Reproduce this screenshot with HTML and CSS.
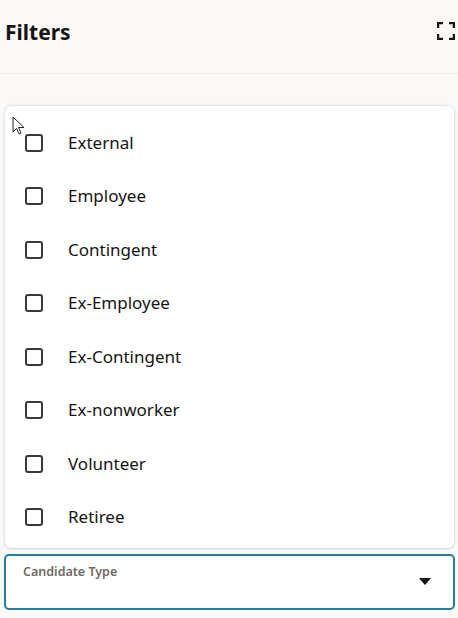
FILE: index.html
```html
<!DOCTYPE html>
<html>
<head>
<meta charset="utf-8">
<link rel="stylesheet" href="styles.css">
</head>
<body>
<div class="page">
  <header class="header">
    <h1 class="title">Filters</h1>
    <button class="expand" aria-label="Expand">
      <svg width="18" height="18" viewBox="0 0 18 18">
        <path d="M1 6V1h5M12 1h5v5M17 12v5h-5M6 17H1v-5" fill="none" stroke="#161513" stroke-width="2.4"/>
      </svg>
    </button>
  </header>
  <div class="card">
    <label class="row"><span class="box"></span><span class="lbl">External</span></label>
    <label class="row"><span class="box"></span><span class="lbl">Employee</span></label>
    <label class="row"><span class="box"></span><span class="lbl">Contingent</span></label>
    <label class="row"><span class="box"></span><span class="lbl">Ex-Employee</span></label>
    <label class="row"><span class="box"></span><span class="lbl">Ex-Contingent</span></label>
    <label class="row"><span class="box"></span><span class="lbl">Ex-nonworker</span></label>
    <label class="row"><span class="box"></span><span class="lbl">Volunteer</span></label>
    <label class="row"><span class="box"></span><span class="lbl">Retiree</span></label>
    <svg class="cursor" width="13" height="19" viewBox="0 0 13 19">
      <path d="M1 1v15l3.5-3.5 2.5 5.5 2-1-2.5-5.5H12z" fill="#fff" stroke="#222" stroke-width="1"/>
    </svg>
  </div>
  <div class="field">
    <span class="field-label">Candidate Type</span>
    <svg class="caret" width="12" height="7" viewBox="0 0 12 7"><path d="M0 0h12L6 7z" fill="#161513"/></svg>
  </div>
</div>
</body>
</html>
```
FILE: styles.css
```css
html, body {
  margin: 0;
  padding: 0;
  background: #fbf9f8;
  font-family: "Noto Sans", "Open Sans", sans-serif;
  color: #161513;
}
.page {
  width: 458px;
  height: 618px;
  overflow: hidden;
}
.header {
  border-bottom: 1px solid #ece9e6;
  display: flex;
  align-items: center;
  justify-content: space-between;
  padding: 0 3px 0 5px;
  box-sizing: border-box;
  height: 74px;
}
.title {
  margin: 0;
  font-size: 21px;
  font-weight: 700;
  line-height: 28px;
  margin-top: -10px;
}
.expand {
  background: none;
  border: 0;
  padding: 0;
  width: 18px;
  height: 18px;
  margin-top: -12px;
  display: flex;
}
.card {
  position: relative;
  margin: 32px 4px 0 5px;
  background: #fff;
  border-radius: 6px;
  box-shadow: 0 0 3px rgba(0,0,0,0.18), 0 1px 2px rgba(0,0,0,0.08);
  padding: 10px 0 4px;
}
.row {
  height: 53.5px;
  display: flex;
  align-items: center;
  padding-left: 20px;
}
.box {
  width: 14px;
  height: 14px;
  border: 2px solid #3b3836;
  border-radius: 3px;
  flex: none;
}
.lbl {
  margin-left: 25px;
  font-size: 17px;
  line-height: 24px;
}
.cursor {
  position: absolute;
  left: 7px;
  top: 10px;
}
.field {
  margin: 6px 3px 0 4px;
  height: 56px;
  box-sizing: border-box;
  border: 2px solid #227e9e;
  border-radius: 5px;
  background: #fff;
  position: relative;
  padding: 7px 0 0 17px;
}
.field-label {
  display: block;
  font-size: 12.5px;
  font-weight: 600;
  color: #6f6964;
  line-height: 18px;
}
.caret {
  position: absolute;
  right: 22px;
  top: 22px;
}
```
